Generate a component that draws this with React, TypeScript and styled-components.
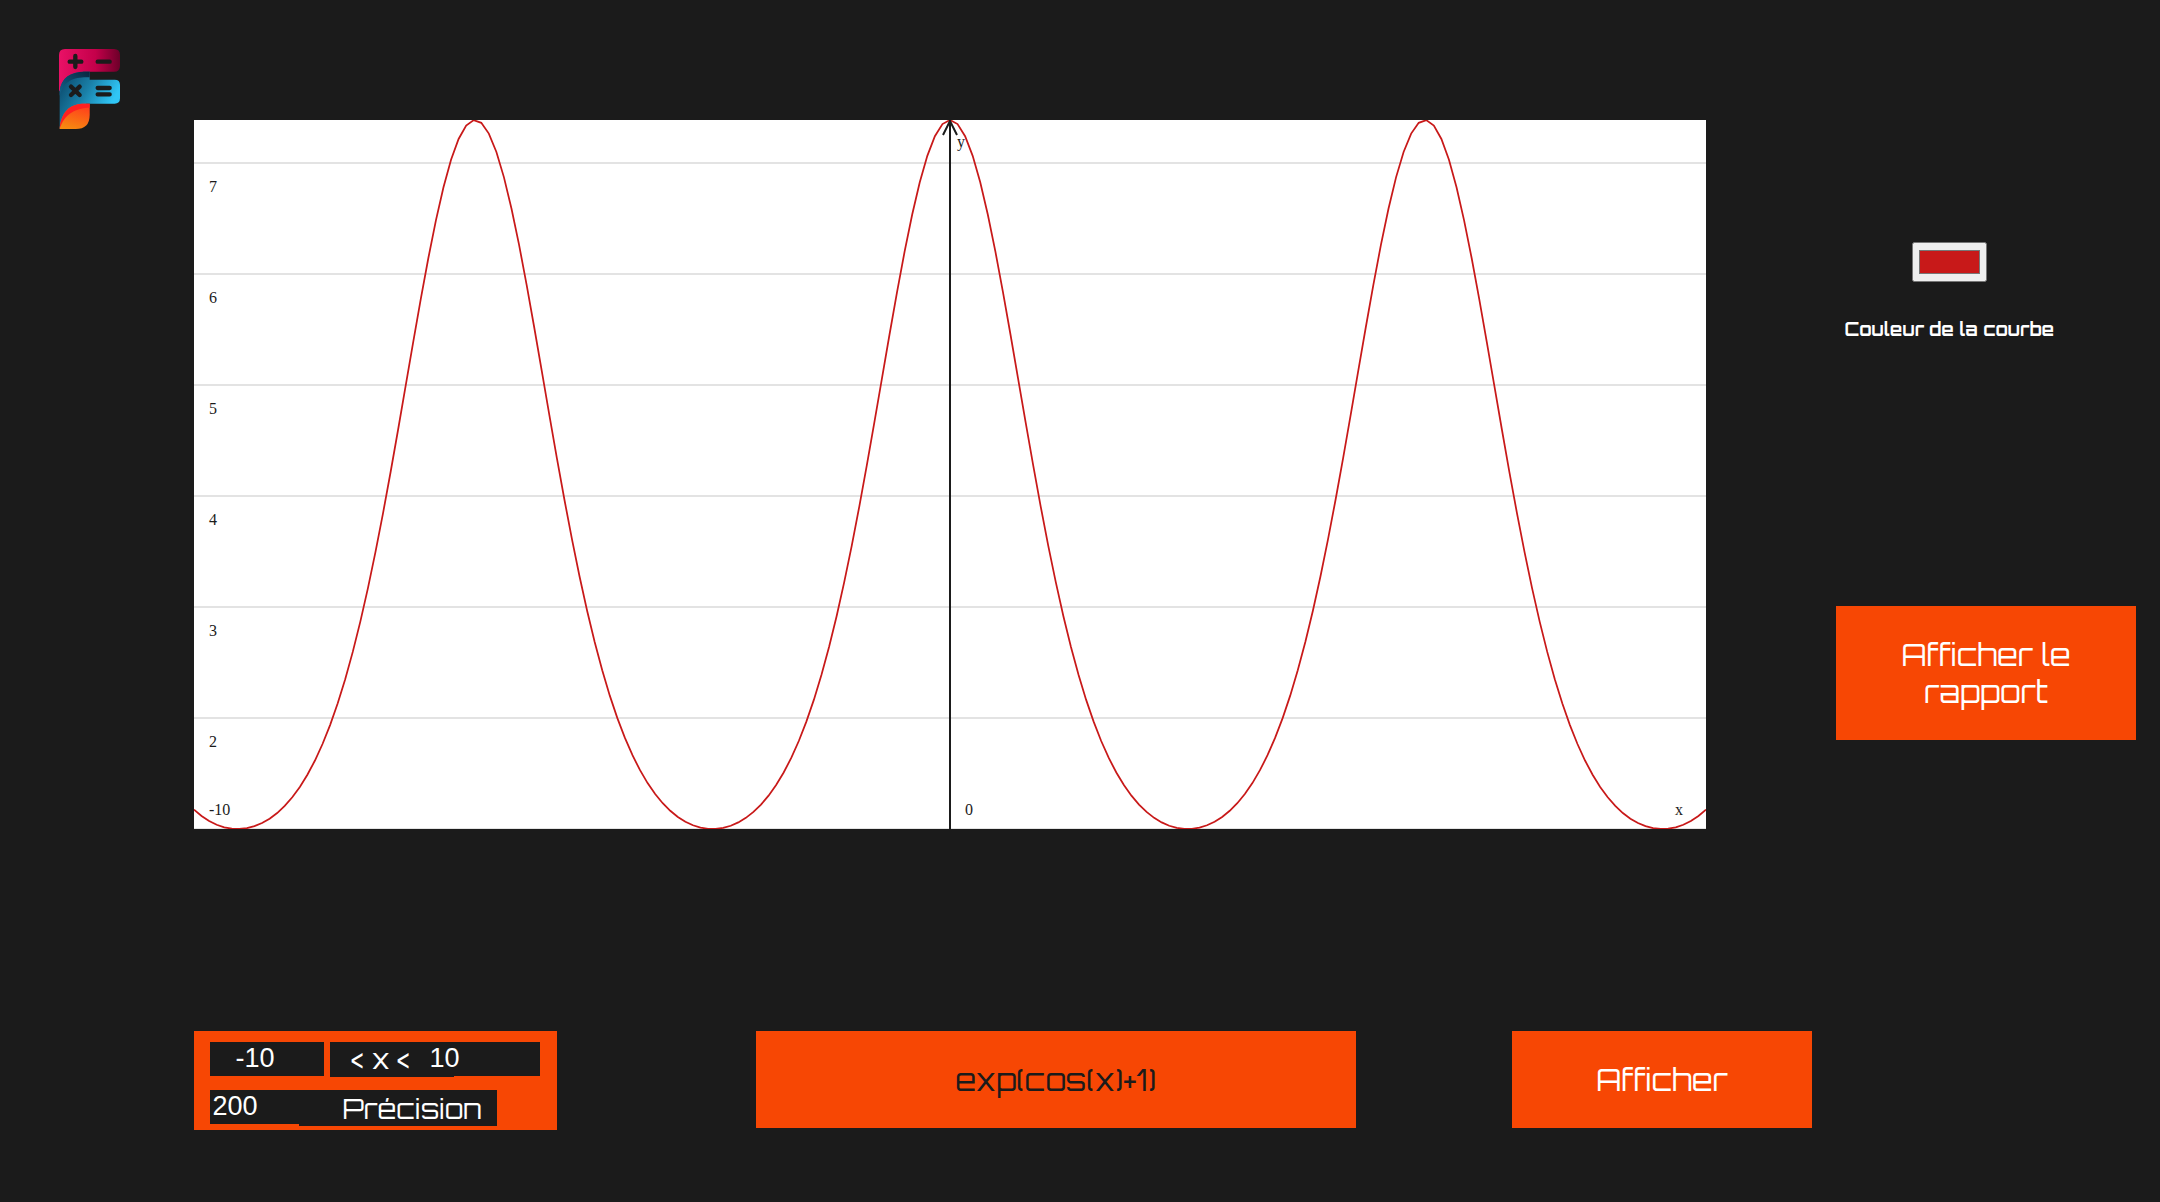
import React, { useMemo, useState } from 'react';
import styled, { createGlobalStyle } from 'styled-components';

const DARK = '#1b1b1b';
const ORANGE = '#f74704';
const DISPLAY = "Orbitron, 'DejaVu Sans', sans-serif";

const GlobalStyle = createGlobalStyle`
  *, *::before, *::after { box-sizing: border-box; }
  body { margin: 0; background: ${DARK}; color: #fff; font-family: ${DISPLAY}; }
`;

const Page = styled.div`
  display: flex;
  flex-direction: column;
  gap: 202px;
  min-height: 100vh;
  background: ${DARK};
`;

const Top = styled.main`
  display: grid;
  grid-template-columns: 9% 70% 1fr;
`;

const LogoLink = styled.a`
  display: block;
  justify-self: start;
  align-self: start;
  margin: 49px 0 0 59px;
`;

const LogoSvg = styled.svg`
  display: block;
  width: 61px;
  height: 80px;
`;

const ChartPanel = styled.div`
  margin-top: 120px;
  background: #fff;
`;

const ChartSvg = styled.svg`
  display: block;
  width: 100%;
  height: auto;
  font-family: 'Liberation Serif', serif;
  font-size: 16px;
  fill: ${DARK};
`;

const Sidebar = styled.aside`
  display: flex;
  flex-direction: column;
  align-items: flex-end;
  gap: 265px;
  padding: 242px 24px 0 0;
`;

const ColorField = styled.div`
  display: flex;
  flex-direction: column;
  align-items: center;
  gap: 35px;
  margin-right: 82px;
`;

const ColorInput = styled.input`
  width: 75px;
  height: 40px;
  padding: 3px 4px;
`;

const ColorLabel = styled.label`
  font-size: 18px;
  font-weight: 700;
  line-height: 24px;
  white-space: nowrap;
`;

const Button = styled.button<{ $tall?: boolean }>`
  width: 300px;
  height: ${(p) => (p.$tall ? 134 : 97)}px;
  padding: 0 48px;
  border: 0;
  background: ${ORANGE};
  color: #fff;
  font-family: ${DISPLAY};
  font-size: 30px;
  line-height: 37px;
  cursor: pointer;
`;

const Controls = styled.form`
  display: grid;
  grid-template-columns: 26fr 35fr 30fr;
  align-items: start;
  margin-left: 9%;
`;

const RangeBox = styled.div`
  display: flex;
  flex-direction: column;
  gap: 13px;
  width: 363px;
  height: 99px;
  padding: 11px 16px 0;
  background: ${ORANGE};
`;

const RangeRow = styled.div`
  display: flex;
  align-items: flex-start;
  height: 35px;
`;

const NumberInput = styled.input<{ $width: number }>`
  width: ${(p) => p.$width}px;
  height: 34px;
  padding: 0 2px 2px;
  border: 0;
  background: ${DARK};
  color: #fff;
  font-family: 'Liberation Sans', Arial, sans-serif;
  font-size: 27px;
  line-height: 30px;
`;

const LowerBound = styled(NumberInput)`
  padding: 0 25px 2px;
  margin-right: 6px;
`;

const UpperBound = styled(NumberInput)`
  margin-left: -28px;
  padding-left: 3px;
`;

const RangeLabel = styled.label`
  width: 124px;
  height: 35px;
  padding-left: 21px;
  background: ${DARK};
  font-size: 27px;
  line-height: 34px;
`;

const PrecisionLabel = styled.label`
  width: 198px;
  height: 36px;
  padding-left: 43px;
  background: ${DARK};
  font-size: 27px;
  line-height: 38px;
`;

const FormulaInput = styled.input`
  width: 600px;
  height: 97px;
  padding: 0;
  border: 0;
  background: ${ORANGE};
  color: ${DARK};
  font-family: ${DISPLAY};
  font-size: 30px;
  text-align: center;
`;

const WIDTH = 1512;
const HEIGHT = 709;
const Y_MIN = 1;
const Y_MAX = Math.exp(2);

const f = (x: number) => Math.exp(Math.cos(x) + 1);
const toY = (y: number) => HEIGHT - ((y - Y_MIN) / (Y_MAX - Y_MIN)) * HEIGHT;

function Logo() {
  return (
    <LogoSvg viewBox="58 57 183 240" aria-hidden="true">
      <defs>
        <linearGradient id="pink" x1="0" x2="1">
          <stop offset="0" stopColor="#e91166" />
          <stop offset="0.6" stopColor="#c4004a" />
          <stop offset="1" stopColor="#6c0029" />
        </linearGradient>
        <linearGradient id="blue" x1="0.1" y1="0" x2="1" y2="0.5">
          <stop offset="0" stopColor="#0b4a6c" />
          <stop offset="0.45" stopColor="#1a80a8" />
          <stop offset="0.9" stopColor="#30c6f6" />
        </linearGradient>
        <linearGradient id="navy" x1="0" y1="1" x2="1" y2="0">
          <stop offset="0" stopColor="#12658e" />
          <stop offset="1" stopColor="#08263f" />
        </linearGradient>
        <linearGradient id="flame" x1="0.6" y1="0" x2="0.3" y2="1">
          <stop offset="0" stopColor="#ff3d1c" />
          <stop offset="1" stopColor="#f68a10" />
        </linearGradient>
      </defs>
      <path fill="url(#pink)" d="M58 182V75Q58 57 76 57H223Q241 57 241 75V107Q241 125 223 125H130L60 184Z" />
      <path fill="url(#blue)" d="M60 297V184C64 144 92 125 135 125H150V149H225Q241 149 241 165V205Q241 221 225 221H140L62 297Z" />
      <path fill="url(#navy)" d="M60 184C64 144 92 125 135 125H150V142C108 140 70 150 60 198Z" />
      <path fill="url(#flame)" d="M60 297C64 244 92 221 135 221H150V255Q150 297 108 297Z" />
      <path fill="#ff2020" d="M60 297C64 244 92 221 135 221H150V233C110 234 74 250 60 297Z" />
      <g stroke={DARK} strokeWidth="13" strokeLinecap="round">
        <path d="M90 95H125M107 78V111M174 95H210" />
        <path d="M94 170L120 195M120 170L94 195M174 174H210M174 193H210" />
      </g>
    </LogoSvg>
  );
}

function Chart({ color, min, max, steps }: { color: string; min: number; max: number; steps: number }) {
  const points = useMemo(
    () =>
      Array.from({ length: steps + 1 }, (_, i) => {
        const x = min + ((max - min) * i) / steps;
        return `${((i / steps) * WIDTH).toFixed(2)},${toY(f(x)).toFixed(2)}`;
      }).join(' '),
    [min, max, steps],
  );
  return (
    <ChartSvg viewBox={`0 0 ${WIDTH} ${HEIGHT}`} role="img" aria-label="exp(cos(x)+1)">
      {[1, 2, 3, 4, 5, 6, 7].map((n) => (
        <line key={n} x1="0" x2={WIDTH} y1={Math.round(toY(n))} y2={Math.round(toY(n))} stroke="#e3e3e3" strokeWidth="2" />
      ))}
      {[2, 3, 4, 5, 6, 7].map((n) => (
        <text key={n} x="15" y={Math.round(toY(n)) + 29}>{n}</text>
      ))}
      <text x="15" y="695">-10</text>
      <text x="771" y="695">0</text>
      <text x="1481" y="695">x</text>
      <text x="763" y="27">y</text>
      <polyline points={points} fill="none" stroke={color} strokeWidth="1.75" />
      <path d="M756 0V709M749 15L756 1L763 15" fill="none" stroke={DARK} strokeWidth="2" />
    </ChartSvg>
  );
}

export default function App() {
  const [color, setColor] = useState('#c81919');
  return (
    <Page>
      <GlobalStyle />
      <Top>
        <LogoLink href="#" aria-label="F"><Logo /></LogoLink>
        <ChartPanel>
          <Chart color={color} min={-10} max={10} steps={200} />
        </ChartPanel>
        <Sidebar>
          <ColorField>
            <ColorInput id="color" type="color" value={color} onChange={(e) => setColor(e.target.value)} />
            <ColorLabel htmlFor="color">Couleur de la courbe</ColorLabel>
          </ColorField>
          <Button type="button" $tall>Afficher le rapport</Button>
        </Sidebar>
      </Top>
      <Controls onSubmit={(e) => e.preventDefault()}>
        <RangeBox>
          <RangeRow>
            <LowerBound $width={114} type="number" defaultValue="-10" aria-label="Minimum x" />
            <RangeLabel htmlFor="max">&lt; x &lt;</RangeLabel>
            <UpperBound $width={114} id="max" type="number" defaultValue="10" />
          </RangeRow>
          <RangeRow>
            <NumberInput $width={89} id="precision" type="number" defaultValue="200" />
            <PrecisionLabel htmlFor="precision">Précision</PrecisionLabel>
          </RangeRow>
        </RangeBox>
        <FormulaInput type="text" defaultValue="exp(cos(x)+1)" aria-label="f(x)" />
        <Button type="submit">Afficher</Button>
      </Controls>
    </Page>
  );
}
